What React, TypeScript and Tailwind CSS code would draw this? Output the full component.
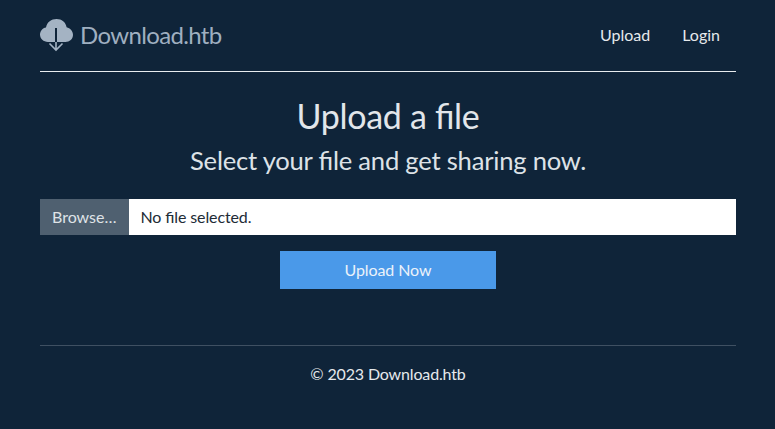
const CloudLogo = () => (
  <svg viewBox="0 0 33 33" className="w-[33px] h-[33px]" fill="none">
    <path
      d="M8 23C3.5 23 0 19.8 0 15.6C0 12 2.6 9 6 8.4C7.2 3 11.2 0 16.6 0C21.8 0 25.6 3 26.6 8.2C30.2 9 33 12 33 15.8C33 20 29.6 23 25.4 23Z"
      fill="#a4b3c3"
    />
    <path d="M16 9V24" stroke="#0f2439" strokeWidth="2" />
    <path d="M16 23V30M9.5 24.5L16 31L22.5 24.5" stroke="#a4b3c3" strokeWidth="1.6" />
  </svg>
);

const App = () => (
  <div className="min-h-[429px] bg-[#0f2439] pl-10 pr-[39px] font-['Lato',sans-serif] text-[#e6e9ec] [font-feature-settings:'liga'_1]">
    <header className="flex h-[72px] items-center justify-between border-b border-[#e8ecef] pb-[1px]">
      <a className="flex items-center gap-[7px]">
        <CloudLogo />
        <span className="text-2xl tracking-[-0.65px] text-[#9fafc0]">Download.htb</span>
      </a>
      <nav className="flex items-center gap-8 pr-4 text-base">
        <a>Upload</a>
        <a>Login</a>
      </nav>
    </header>

    <main className="flex flex-col items-center">
      <h1 className="mt-[21px] text-[34px] leading-[46px] tracking-[-0.3px] text-[#e2e6ea]">Upload a file</h1>
      <p className="mt-[7px] text-[25.6px] leading-[29px] tracking-[-0.22px] text-[#dde2e7]">Select your file and get sharing now.</p>

      <div className="mt-6 flex h-9 w-full items-center bg-white text-base">
        <span className="flex h-full items-center bg-[#4f6070] px-3 text-[#dfe3e7]">Browse…</span>
        <span className="pl-3 tracking-[-0.12px] text-[#212b36]">No file selected.</span>
      </div>

      <button className="mt-4 h-[38px] w-[216px] bg-[#4a99e9] text-base tracking-[-0.1px] text-[#eaf2fa]">Upload Now</button>
    </main>

    <footer className="mt-[56px] border-t border-[#3f5062] pt-4 text-center text-base leading-6 tracking-[-0.15px]">
      © 2023 Download.htb
    </footer>
  </div>
);

export default App;
